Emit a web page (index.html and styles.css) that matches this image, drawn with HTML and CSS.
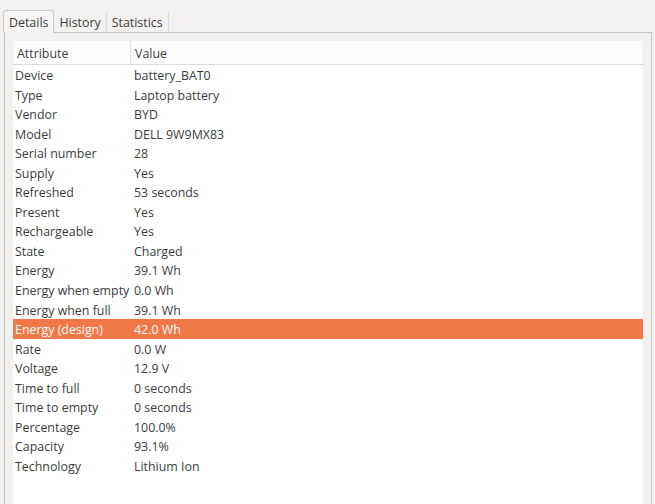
FILE: index.html
```html
<!DOCTYPE html>
<html>
<head>
  <title>Battery details</title>
  <link rel="stylesheet" href="styles.css">
</head>
<body>
  <div class="tabs">
    <div class="tab active">Details</div>
    <div class="tab">History</div>
    <div class="tab">Statistics</div>
  </div>
  <div class="frame">
    <div class="list">
      <div class="list-head">
        <div class="col-attr">Attribute</div>
        <div class="col-value">Value</div>
      </div>
      <div class="row"><div class="col-attr">Device</div><div class="col-value">battery_BAT0</div></div>
      <div class="row"><div class="col-attr">Type</div><div class="col-value">Laptop battery</div></div>
      <div class="row"><div class="col-attr">Vendor</div><div class="col-value">BYD</div></div>
      <div class="row"><div class="col-attr">Model</div><div class="col-value">DELL 9W9MX83</div></div>
      <div class="row"><div class="col-attr">Serial number</div><div class="col-value">28</div></div>
      <div class="row"><div class="col-attr">Supply</div><div class="col-value">Yes</div></div>
      <div class="row"><div class="col-attr">Refreshed</div><div class="col-value">53 seconds</div></div>
      <div class="row"><div class="col-attr">Present</div><div class="col-value">Yes</div></div>
      <div class="row"><div class="col-attr">Rechargeable</div><div class="col-value">Yes</div></div>
      <div class="row"><div class="col-attr">State</div><div class="col-value">Charged</div></div>
      <div class="row"><div class="col-attr">Energy</div><div class="col-value">39.1 Wh</div></div>
      <div class="row"><div class="col-attr">Energy when empty</div><div class="col-value">0.0 Wh</div></div>
      <div class="row"><div class="col-attr">Energy when full</div><div class="col-value">39.1 Wh</div></div>
      <div class="row selected"><div class="col-attr">Energy (design)</div><div class="col-value">42.0 Wh</div></div>
      <div class="row"><div class="col-attr">Rate</div><div class="col-value">0.0 W</div></div>
      <div class="row"><div class="col-attr">Voltage</div><div class="col-value">12.9 V</div></div>
      <div class="row"><div class="col-attr">Time to full</div><div class="col-value">0 seconds</div></div>
      <div class="row"><div class="col-attr">Time to empty</div><div class="col-value">0 seconds</div></div>
      <div class="row"><div class="col-attr">Percentage</div><div class="col-value">100.0%</div></div>
      <div class="row"><div class="col-attr">Capacity</div><div class="col-value">93.1%</div></div>
      <div class="row"><div class="col-attr">Technology</div><div class="col-value">Lithium Ion</div></div>
    </div>
  </div>
</body>
</html>
```

FILE: styles.css
```css
/* Details tab of the power statistics window */
html, body {
  height: 100%;
}

body {
  margin: 0;
  background-color: #f2f1f0;
  color: #3c3c3c;
  font-family: "Open Sans", "DejaVu Sans", sans-serif;
  font-size: 12.4px;
  display: flex;
  flex-direction: column;
  overflow: hidden;
}

.tabs {
  display: flex;
  padding: 10px 0 0 3px;
  height: 22px;
}

.tab {
  padding: 1px 5px 0;
  line-height: 20px;
  margin-top: 2px;
  border-right: 1px solid #dcdad7;
}

.tab.active {
  margin-top: 0;
  line-height: 22px;
  background-color: #f6f5f4;
  border: 1px solid #cfccc8;
  border-bottom: none;
  border-radius: 3px 3px 0 0;
  position: relative;
  z-index: 1;
  margin-bottom: -1px;
}

.frame {
  flex: 1;
  display: flex;
  margin: 0 3px 0 4px;
  padding: 8px 8px 0 8px;
  border: 1px solid #c8c5c1;
  border-bottom: none;
}

.list {
  flex: 1;
  background-color: #fff;
}

.list-head {
  display: flex;
  height: 23px;
  line-height: 25px;
  background-color: #fcfcfc;
  border-bottom: 1px solid #dedcda;
}

.list-head .col-attr {
  padding-left: 4px;
  border-right: 1px solid #e4e2e0;
}

.list-head .col-value {
  padding-left: 4px;
}

.row {
  display: flex;
  height: 19.55px;
  line-height: 21px;
}

.col-attr {
  width: 118px;
  padding-left: 2px;
  box-sizing: border-box;
  white-space: nowrap;
}

.col-value {
  padding-left: 3px;
}

.row.selected {
  background-color: #f07746;
  color: #fff;
}
```
